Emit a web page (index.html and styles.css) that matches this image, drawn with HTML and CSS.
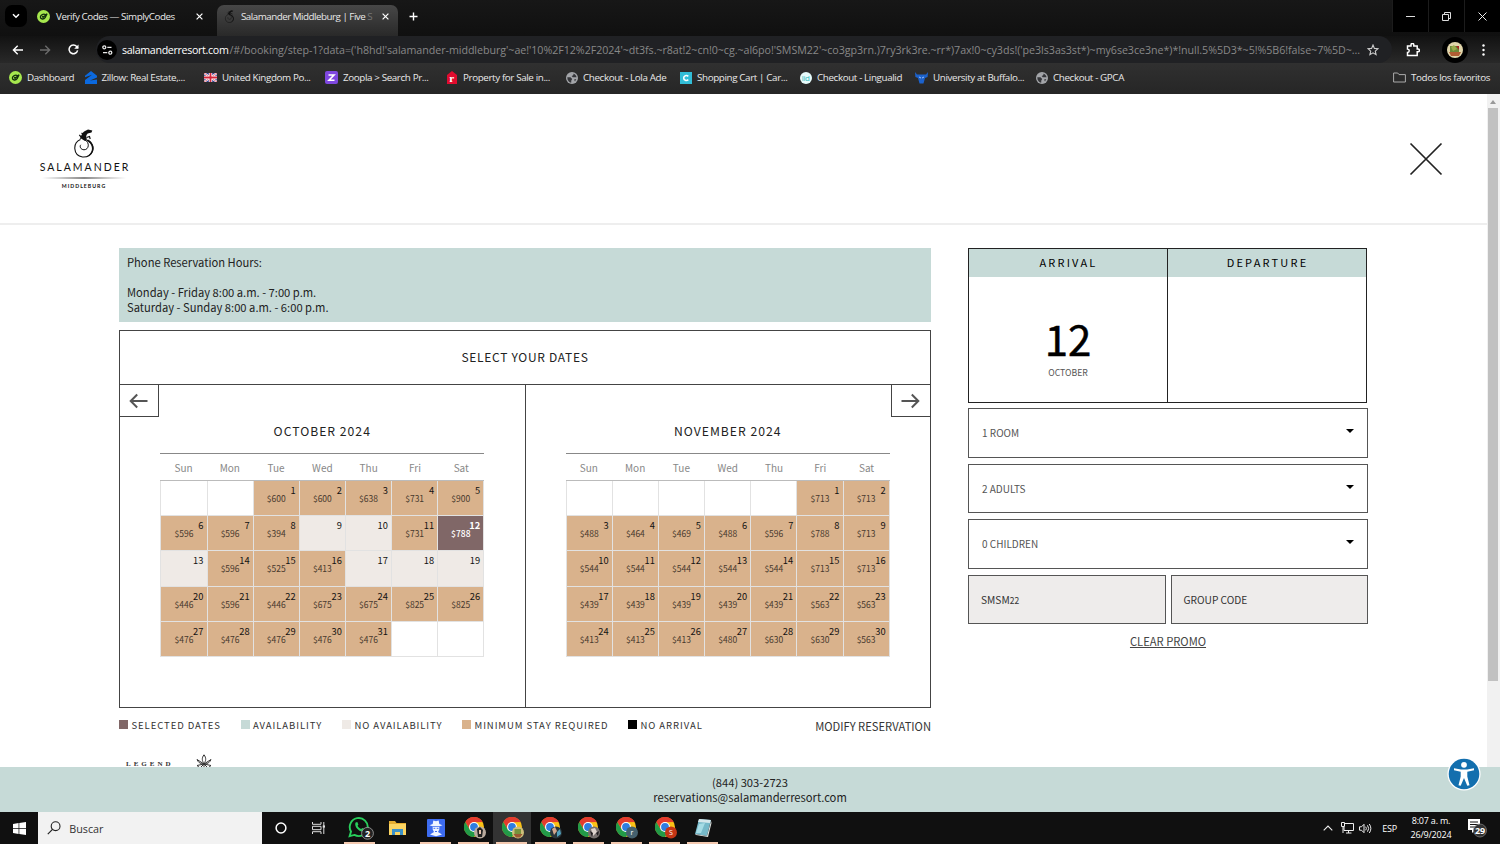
FILE: index.html
```html
<!DOCTYPE html>
<html lang="en">
<head>
    <meta charset="UTF-8">
    <meta name="viewport" content="width=device-width, initial-scale=1.0">
    <title>Salamander Middleburg | Five Star</title>
    <link rel="stylesheet" href="styles.css">
</head>
<body>
    <svg class="defs" width="0" height="0">
        <symbol id="chrome" viewBox="0 0 20 20">
            <circle cx="10" cy="10" r="10" fill="#fbc116"/>
            <path d="M1.3 5A10 10 0 0 1 18.7 5L10 5.2 5.7 12.5Z" fill="#e33b2e"/>
            <path d="M1.3 5A10 10 0 0 0 10 20L14.3 12.5 5.7 12.5Z" fill="#229a48"/>
            <circle cx="10" cy="10" r="5" fill="#fff"/>
            <circle cx="10" cy="10" r="3.9" fill="#2f7de1"/>
        </symbol>
        <symbol id="globe" viewBox="0 0 12 12">
            <circle cx="6" cy="6" r="6" fill="#a3a5a9"/>
            <path d="M1.3 5.2 4.5 5.3 6.2 7 5.3 8.4 5.2 10.7C3 10.4 1.2 8.4 1.3 5.2ZM5 1.3 7.6 1.5 7.2 3.3 5.6 4 6.8 5.3 10.6 5.2C10.3 2.8 8 1 5 1.3ZM8 7.5 10.3 7 9 9.5Z" fill="#35363a"/>
        </symbol>
        <symbol id="codes" viewBox="0 0 12 12">
            <circle cx="6" cy="6" r="6" fill="#a6e84e"/>
            <path d="M7.8 4.2C6 3.3 3.3 4.4 3.1 6.5 3 8.6 6.2 9 7.5 7.1L9.3 3.4 5.6 6.7 4.8 5.8" fill="none" stroke="#14300d" stroke-width="1.2"/>
        </symbol>
        <symbol id="lizard" viewBox="0 0 22 29">
            <path d="M7.5 10.4C-.5 13.5-.3 26.5 9.5 28 20.5 28.5 23 17 16 12.5" fill="none" stroke="#111" stroke-width="1.1"/>
            <path d="M13 11.5C20.5 14.5 21.5 24 12.5 27.9 23 26.5 22.5 14 15 10.5Z" fill="#111"/>
            <path d="M6.5 10.5C8 8 8.5 4 12 2L15 .6 19.3 1.4 18.5 3.6 14.7 4.6C13 6 12.7 8 14 10.5L12 12 8 9.6Z" fill="#111"/>
            <path d="M8.5 8.5 6.3 5.8M10 5 8.5 4M13.5 8.5 16.5 7.5 17.2 10" fill="none" stroke="#111" stroke-width="1.2"/>
            <path d="M12 11C17 13.5 16 20.8 11 20.8 7.6 20.6 6.3 17.4 7.8 15.8" fill="none" stroke="#111" stroke-width="1"/>
        </symbol>
    </svg>

    <!-- Browser -->
    <header class="browser">
        <div class="tabs">
            <button class="tab-search"><svg width="8" height="6" viewBox="0 0 8 6"><path d="M1 1.2 4 4.2 7 1.2" fill="none" stroke="#fff" stroke-width="1.5"/></svg></button>
            <div class="tab">
                <svg width="13" height="13"><use href="#codes"/></svg>
                <span class="tab-title first">Verify Codes — SimplyCodes</span>
                <svg class="x" width="7" height="7" viewBox="0 0 7 7"><path d="M.6.6 6.4 6.4M6.4.6.6 6.4" stroke="#fff" stroke-width="1.2"/></svg>
            </div>
            <div class="tab active">
                <svg width="11" height="13"><use href="#lizard"/></svg>
                <span class="tab-title second">Salamander Middleburg | Five <i>S</i></span>
                <svg class="x" width="7" height="7" viewBox="0 0 7 7"><path d="M.6.6 6.4 6.4M6.4.6.6 6.4" stroke="#fff" stroke-width="1.2"/></svg>
            </div>
            <svg class="new-tab" width="9" height="9" viewBox="0 0 9 9"><path d="M4.5.5V8.5M.5 4.5H8.5" stroke="#fff" stroke-width="1.4"/></svg>
            <div class="window-buttons">
                <span><svg width="9" height="9" viewBox="0 0 9 9"><path d="M0 4.5H9" stroke="#ddd"/></svg></span>
                <span><svg width="9" height="9" viewBox="0 0 9 9"><path d="M.5 2.5H6.5V8.5H.5ZM2.5 2.5V.5H8.5V6.5H6.5" fill="none" stroke="#ddd"/></svg></span>
                <span><svg width="9" height="9" viewBox="0 0 9 9"><path d="M.5.5 8.5 8.5M8.5.5.5 8.5" stroke="#eee"/></svg></span>
            </div>
        </div>
        <div class="toolbar">
            <svg class="nav-back" width="11" height="10" viewBox="0 0 11 10"><path d="M11 5H1.5M5.7.7 1.4 5 5.7 9.3" fill="none" stroke="#fff" stroke-width="1.4"/></svg>
            <svg class="nav-next" width="11" height="10" viewBox="0 0 11 10"><path d="M0 5H9.5M5.3.7 9.6 5 5.3 9.3" fill="none" stroke="#6b6b6b" stroke-width="1.4"/></svg>
            <svg class="nav-reload" width="11" height="11" viewBox="0 0 11 11"><path d="M9.6 6.4A4.3 4.3 0 1 1 8.7 2.6L9.9 4" fill="none" stroke="#fff" stroke-width="1.5"/><path d="M10.5.4V4.8H6.2Z" fill="#fff"/></svg>
            <div class="address">
                <span class="site-info"><svg width="11" height="10" viewBox="0 0 11 10"><g fill="none" stroke="#e8e8e8" stroke-width="1.3"><circle cx="2.3" cy="2.3" r="1.5"/><path d="M5.3 2.3H9.5M1 7.7H5.3"/><circle cx="8.3" cy="7.7" r="1.5"/></g></svg></span>
                <span class="host">salamanderresort.com</span><span class="path">/#/booking/step-1?data=('h8hd!'salamander-middleburg'~ae!'10%2F12%2F2024'~dt3fs.~r8at!2~cn!0~cg.~al6po!'SMSM22'~co3gp3rn.)7ry3rk3re.~rr*)7ax!0~cy3ds!('pe3ls3as3st*)~my6se3ce3ne*)*!null.5%5D3*~5!%5B6!false~7%5D~...</span>
                <svg class="star" width="12" height="12" viewBox="0 0 12 12"><path d="M6 1 7.4 4.4 11 4.7 8.3 7.1 9.1 10.7 6 8.8 2.9 10.7 3.7 7.1 1 4.7 4.6 4.4Z" fill="none" stroke="#ccc" stroke-width="1.1"/></svg>
            </div>
            <svg class="puzzle" width="14" height="14" viewBox="0 0 14 14"><path d="M1.5 3H5V1.8A1.3 1.3 0 0 1 7.8 1.8V3H11.2V6H12A1.4 1.4 0 0 1 12 8.8H11.2V12.5H1.5V9.4C3.8 9.3 3.8 6.2 1.5 6.1Z" fill="none" stroke="#fff" stroke-width="1.5"/></svg>
            <span class="avatar"><svg width="16" height="16" viewBox="0 0 16 16"><circle cx="8" cy="8" r="8" fill="#e0d5aa"/><path d="M3 4H12V11H3Z" fill="#6b8a39"/><path d="M2 10H14L12 14H4Z" fill="#b05d33"/><path d="M4 5 7 3 10 7 6 9Z" fill="#9bac4b"/><path d="M9 4H12V8Z" fill="#a32922"/></svg></span>
            <svg class="dots" width="3" height="12" viewBox="0 0 3 12"><g fill="#fff"><circle cx="1.5" cy="1.5" r="1.2"/><circle cx="1.5" cy="6" r="1.2"/><circle cx="1.5" cy="10.5" r="1.2"/></g></svg>
        </div>
        <div class="bookmarks">
            <a><svg width="13" height="13"><use href="#codes"/></svg>Dashboard</a>
            <a><svg width="12" height="13" viewBox="0 0 12 13"><path d="M6 0 12 4.7V6.5L5 9.4 12 8.4V13H0V9L7 3.8 0 6.2V4.7Z" fill="#0b69df"/></svg>Zillow: Real Estate,...</a>
            <a><svg width="13" height="9" viewBox="0 0 13 9"><path d="M0 0H13V9H0Z" fill="#364391"/><path d="M0 0 13 9M13 0 0 9" stroke="#fff" stroke-width="2"/><path d="M0 0 13 9M13 0 0 9" stroke="#d3253a" stroke-width=".7"/><path d="M6.5 0V9M0 4.5H13" stroke="#fff" stroke-width="3.4"/><path d="M6.5 0V9M0 4.5H13" stroke="#d3253a" stroke-width="1.8"/></svg>United Kingdom Po...</a>
            <a><svg width="13" height="13" viewBox="0 0 13 13"><rect width="13" height="13" rx="2" fill="#7e47df"/><path d="M3.5 4H9L4 9.2H9.5" fill="none" stroke="#fff" stroke-width="1.6"/></svg>Zoopla &gt; Search Pr...</a>
            <a><svg width="12" height="13" viewBox="0 0 12 13"><path d="M6 0 11 4V13H1V4Z" fill="#e00c2e"/><text x="3.2" y="11" class="mark-r">r</text></svg>Property for Sale in...</a>
            <a><svg width="12" height="12"><use href="#globe"/></svg>Checkout - Lola Ade</a>
            <a><svg width="12" height="12" viewBox="0 0 12 12"><rect width="12" height="12" fill="#32bdd7"/><path d="M8.3 4.3C6.5 2.7 3.7 3.7 3.7 6S6.5 9.3 8.3 7.7" fill="none" stroke="#fff" stroke-width="1.6"/></svg>Shopping Cart | Car...</a>
            <a><svg width="12" height="12" viewBox="0 0 12 12"><circle cx="6" cy="6" r="6" fill="#e7fbfb"/><text x="1.8" y="9" class="mark-id">lid</text></svg>Checkout - Lingualid</a>
            <a><svg width="13" height="12" viewBox="0 0 13 12"><path d="M0 0 2 2.5H11L13 0 12.6 5 10 6 8.5 11.5H4.5L3 6 .4 5Z" fill="#1c62cc"/><path d="M4 5 6 6M9 5 7 6" stroke="#bbd5ff" stroke-width=".8"/></svg>University at Buffalo...</a>
            <a><svg width="12" height="12"><use href="#globe"/></svg>Checkout - GPCA</a>
            <a class="all"><svg width="13" height="11" viewBox="0 0 13 11"><path d="M.6 1H4.7L6 2.6H12.4V10H.6Z" fill="none" stroke="#aaa"/></svg>Todos los favoritos</a>
        </div>
    </header>

    <!-- Site -->
    <div class="page">
        <div class="content">
            <div class="site-header">
                <div class="logo">
                    <svg width="22" height="29"><use href="#lizard"/></svg>
                    <span class="logo-name">SALAMANDER</span>
                    <span class="logo-line"></span>
                    <span class="logo-place">MIDDLEBURG</span>
                </div>
                <svg width="34" height="34" viewBox="0 0 34 34"><path d="M1.5 1.5 32.5 32.5M32.5 1.5 1.5 32.5" stroke="#222" stroke-width="1.7"/></svg>
            </div>
            <div class="booking">
                <main class="left">
                    <div class="notice">
                        <p class="hours">Phone Reservation Hours:</p>
                        <p>Monday - Friday 8:00 a.m. - 7:00 p.m.</p>
                        <p class="weekend">Saturday - Sunday 8:00 a.m. - 6:00 p.m.</p>
                    </div>
                    <div class="calendar">
                        <h1>SELECT YOUR DATES</h1>
                        <div class="months">
                            <section class="month">
                                <button class="arrow prev"><svg width="19" height="16" viewBox="0 0 19 16"><path d="M18.5 8H2M8.2 1.5 1.7 8 8.2 14.5" fill="none" stroke="#555" stroke-width="2"/></svg></button>
                                <h2>OCTOBER 2024</h2>
                                <div class="weekdays"><span>Sun</span><span>Mon</span><span>Tue</span><span>Wed</span><span>Thu</span><span>Fri</span><span>Sat</span></div>
                                <div class="days">
                                    <div></div><div></div>
                                    <div class="min"><b>1</b>$600</div><div class="min"><b>2</b>$600</div><div class="min"><b>3</b>$638</div><div class="min"><b>4</b>$731</div><div class="min"><b>5</b>$900</div>
                                    <div class="min"><b>6</b>$596</div><div class="min"><b>7</b>$596</div><div class="min"><b>8</b>$394</div><div class="none"><b>9</b></div><div class="none"><b>10</b></div><div class="min"><b>11</b>$731</div><div class="selected"><b>12</b>$788</div>
                                    <div class="none"><b>13</b></div><div class="min"><b>14</b>$596</div><div class="min"><b>15</b>$525</div><div class="min"><b>16</b>$413</div><div class="none"><b>17</b></div><div class="none"><b>18</b></div><div class="none"><b>19</b></div>
                                    <div class="min"><b>20</b>$446</div><div class="min"><b>21</b>$596</div><div class="min"><b>22</b>$446</div><div class="min"><b>23</b>$675</div><div class="min"><b>24</b>$675</div><div class="min"><b>25</b>$825</div><div class="min"><b>26</b>$825</div>
                                    <div class="min"><b>27</b>$476</div><div class="min"><b>28</b>$476</div><div class="min"><b>29</b>$476</div><div class="min"><b>30</b>$476</div><div class="min"><b>31</b>$476</div><div></div><div></div>
                                </div>
                            </section>
                            <section class="month">
                                <button class="arrow next"><svg width="19" height="16" viewBox="0 0 19 16"><path d="M.5 8H17M10.8 1.5 17.3 8 10.8 14.5" fill="none" stroke="#555" stroke-width="2"/></svg></button>
                                <h2>NOVEMBER 2024</h2>
                                <div class="weekdays"><span>Sun</span><span>Mon</span><span>Tue</span><span>Wed</span><span>Thu</span><span>Fri</span><span>Sat</span></div>
                                <div class="days">
                                    <div></div><div></div><div></div><div></div><div></div>
                                    <div class="min"><b>1</b>$713</div><div class="min"><b>2</b>$713</div>
                                    <div class="min"><b>3</b>$488</div><div class="min"><b>4</b>$464</div><div class="min"><b>5</b>$469</div><div class="min"><b>6</b>$488</div><div class="min"><b>7</b>$596</div><div class="min"><b>8</b>$788</div><div class="min"><b>9</b>$713</div>
                                    <div class="min"><b>10</b>$544</div><div class="min"><b>11</b>$544</div><div class="min"><b>12</b>$544</div><div class="min"><b>13</b>$544</div><div class="min"><b>14</b>$544</div><div class="min"><b>15</b>$713</div><div class="min"><b>16</b>$713</div>
                                    <div class="min"><b>17</b>$439</div><div class="min"><b>18</b>$439</div><div class="min"><b>19</b>$439</div><div class="min"><b>20</b>$439</div><div class="min"><b>21</b>$439</div><div class="min"><b>22</b>$563</div><div class="min"><b>23</b>$563</div>
                                    <div class="min"><b>24</b>$413</div><div class="min"><b>25</b>$413</div><div class="min"><b>26</b>$413</div><div class="min"><b>27</b>$480</div><div class="min"><b>28</b>$630</div><div class="min"><b>29</b>$630</div><div class="min"><b>30</b>$563</div>
                                </div>
                            </section>
                        </div>
                    </div>
                    <div class="legend">
                        <span class="key selected-key">SELECTED DATES</span>
                        <span class="key open-key">AVAILABILITY</span>
                        <span class="key none-key">NO AVAILABILITY</span>
                        <span class="key min-key">MINIMUM STAY REQUIRED</span>
                        <span class="key closed-key">NO ARRIVAL</span>
                        <a class="modify">MODIFY RESERVATION</a>
                    </div>
                    <div class="partners">
                        <span>LEGEND</span>
                        <svg width="16" height="20" viewBox="0 0 16 20"><path d="M8 .8C5.5 4 6 7 8 9.5 10 7 10.5 4 8 .8ZM8 10 1 5.5C2 8 4 10 8 10 12 10 14 8 15 5.5ZM8 10 1 11.5 4 14 8 10 12 14 15 11.5ZM8 9V20" fill="none" stroke="#333"/></svg>
                    </div>
                </main>
                <aside class="right">
                    <div class="stay">
                        <div class="stay-day"><h3>ARRIVAL</h3><strong>12</strong><small>OCTOBER</small></div>
                        <div class="stay-day"><h3>DEPARTURE</h3></div>
                    </div>
                    <div class="select"><span>1 ROOM</span><i></i></div>
                    <div class="select"><span>2 ADULTS</span><i></i></div>
                    <div class="select"><span>0 CHILDREN</span><i></i></div>
                    <div class="codes">
                        <div class="code">SMSM<small>22</small></div>
                        <div class="code">GROUP CODE</div>
                    </div>
                    <a class="clear">CLEAR PROMO</a>
                </aside>
            </div>
        </div>
        <div class="scrollbar"><i></i><span></span></div>
    </div>
    <footer class="contact">
        <p class="phone">(844) 303-2723</p>
        <p class="mail">reservations@salamanderresort.com</p>
        <svg class="access" width="34" height="34" viewBox="0 0 34 34"><circle cx="17" cy="17" r="16.6" fill="#fff"/><circle cx="17" cy="17" r="15.3" fill="#136fae"/><circle cx="17" cy="7.8" r="2.9" fill="#fff"/><path d="M7 11.3 14 12.5H20L27 11.3V13.3L20.3 14.8V19.5L22.5 28.2 20.3 28.8 17 21 13.7 28.8 11.5 28.2 13.7 19.5V14.8L7 13.3Z" fill="#fff"/></svg>
    </footer>

    <!-- Taskbar -->
    <div class="taskbar">
        <span class="start"><svg width="13" height="13" viewBox="0 0 13 13"><path d="M0 1.9 5.6 1.1V6.1H0ZM6.3 1 13 0V6.1H6.3ZM0 6.8H5.6V11.9L0 11.1ZM6.3 6.8H13V13L6.3 12Z" fill="#fff"/></svg></span>
        <div class="search"><svg width="14" height="14" viewBox="0 0 14 14"><circle cx="8.6" cy="5.2" r="4.4" fill="none" stroke="#222" stroke-width="1.1"/><path d="M5.5 8.4.8 13.2" stroke="#222" stroke-width="1.2"/></svg>Buscar</div>
        <span class="task"><svg width="12" height="12" viewBox="0 0 12 12"><circle cx="6" cy="6" r="4.9" fill="none" stroke="#fff" stroke-width="1.5"/></svg></span>
        <span class="task"><svg width="14" height="12" viewBox="0 0 14 12"><path d="M.5 0V2.3H9V0M.5 12V9.7H9V12M.5 4.3H9V7.7H.5ZM11.8 0V12" fill="none" stroke="#ddd"/><path d="M10.7 3.4H13V5.6H10.7Z" fill="#ddd"/></svg></span>
        <span class="task running whatsapp"><svg width="26" height="24" viewBox="0 0 26 24"><path d="M1.6 20.2 3 15.6A9 9 0 1 1 6.4 18.9Z" fill="#101010" stroke="#28cf5c" stroke-width="1.9"/><path d="M7.6 6.4 9.3 6 10.4 8.5 9.6 9.7C10.5 11.4 11.5 12.3 13.2 13L14.3 11.9 16.7 13.1C16.5 15.2 14.8 15.9 12.8 15.2 9.5 14 6 9.6 7.6 6.4Z" fill="#28cf5c"/><circle cx="19.5" cy="17.3" r="5.9" fill="#222" stroke="#aaa" stroke-width=".8"/><text x="19.5" y="20.7" class="badge">2</text></svg></span>
        <span class="task"><svg width="17" height="16" viewBox="0 0 17 16"><path d="M0 1H6L7.5 3H17V15H0Z" fill="#e5ae31"/><path d="M0 4H17V15H0Z" fill="#fbd563"/><path d="M3 15V9H14V15H11V12H6V15Z" fill="#3b91c9"/></svg></span>
        <span class="task running"><svg width="18" height="18" viewBox="0 0 18 18"><rect width="18" height="18" rx="1" fill="#3d6cf0"/><path d="M6.3 1.5 9 2.2 11.7 1.5 12.3 5 15.5 6.3 12.5 7.3H5.5L2.5 6.3 5.7 5ZM5.7 8H12.3V10.5L11 13 15 15.5 9 17.2 3 15.5 7 13 5.7 10.5Z" fill="#f0f5ff"/><path d="M6.5 9.3H8.3M9.7 9.3H11.5M8 12.5H10" stroke="#3d6cf0"/></svg></span>
        <span class="task running profile"><svg width="23" height="22" viewBox="0 0 23 22"><use href="#chrome" width="20" height="20"/><circle cx="16" cy="15.5" r="6" fill="#b9aa9d"/><path d="M13 12 16 10 19 13 18 20H14Z" fill="#222"/><path d="M15 13H17V17H15Z" fill="#e6c2ac"/></svg></span>
        <span class="task running profile current"><svg width="23" height="22" viewBox="0 0 23 22"><use href="#chrome" width="20" height="20"/><circle cx="16" cy="15.5" r="6" fill="#cfbf7a"/><path d="M12.5 12H19V17H12.5Z" fill="#76933d"/><path d="M11.5 17H20.5L18 20.5H14Z" fill="#9b5832"/></svg></span>
        <span class="task running profile"><svg width="23" height="22" viewBox="0 0 23 22"><use href="#chrome" width="20" height="20"/><circle cx="16" cy="15.5" r="6" fill="#28343a"/><path d="M12 12 15 10 17 14 14 18Z" fill="#d3a78d"/><path d="M17 15 20 12 21 17 17 20Z" fill="#51a1bd"/></svg></span>
        <span class="task running profile"><svg width="23" height="22" viewBox="0 0 23 22"><use href="#chrome" width="20" height="20"/><circle cx="16" cy="15.5" r="6" fill="#78716f"/><path d="M13 12 17 11 19 15 15 19Z" fill="#dfd4ce"/><path d="M12 14 15 16 14 20ZM18 16 21 14 20 19Z" fill="#211d20"/></svg></span>
        <span class="task running profile"><svg width="23" height="22" viewBox="0 0 23 22"><use href="#chrome" width="20" height="20"/><circle cx="16" cy="15.5" r="6" fill="#45616f"/><text x="16" y="18" class="user">r</text></svg></span>
        <span class="task running profile"><svg width="23" height="22" viewBox="0 0 23 22"><use href="#chrome" width="20" height="20"/><circle cx="16" cy="15.5" r="6" fill="#c43515"/><text x="16" y="18" class="user">S</text></svg></span>
        <span class="task running"><svg width="18" height="20" viewBox="0 0 18 20"><path d="M5 1 17 2 13 18 1 16Z" fill="#77b9c9"/><path d="M5 1 17 2 16 5 4 4Z" fill="#d6e7eb"/><path d="M1 16 13 18 17 3 17.5 5 14 19 2 17Z" fill="#e3e6e3"/><path d="M5 6 11 5 7 15 2 15Z" fill="#a6dce5"/></svg></span>
        <div class="tray">
            <svg class="chevron" width="10" height="6" viewBox="0 0 10 6"><path d="M.7 5.3 5 1 9.3 5.3" fill="none" stroke="#eee" stroke-width="1.1"/></svg>
            <svg class="network" width="13" height="12" viewBox="0 0 13 12"><path d="M4 1.5H12.5V8.5H3V5M7.5 8.5V11M5 11H10.5M.5.5H3.5V4.5H.5ZM2 5V11" fill="none" stroke="#eee"/></svg>
            <svg class="volume" width="13" height="11" viewBox="0 0 13 11"><path d="M.5 3.8H2.5L5 1.3V9.7L2.5 7.2H.5ZM6.7 3.7Q8 5.5 6.7 7.3M8.5 2.3Q10.8 5.5 8.5 8.7M10.3 1Q13.4 5.5 10.3 10" fill="none" stroke="#eee"/></svg>
            <span class="lang">ESP</span>
            <span class="clock">8:07 a. m.<br>26/9/2024</span>
            <svg class="notes" width="22" height="20" viewBox="0 0 22 20"><path d="M1 1H13V12H8L5 15V12H1Z" fill="#fff"/><path d="M3 4H11M3 6.5H11M3 9H8" stroke="#111"/><circle cx="13" cy="12.5" r="6.5" fill="#333" stroke="#888" stroke-width=".7"/><text x="13" y="16" class="badge">29</text></svg>
        </div>
    </div>
</body>
</html>
```
FILE: styles.css
```css
* {
    box-sizing: border-box;
}
body {
    margin: 0;
    width: 1500px;
    height: 844px;
    overflow: hidden;
    background: #fff;
    font-family: 'Noto Sans CJK SC', 'Open Sans', sans-serif;
    color: #333;
}
h1, h2, h3, p {
    margin: 0;
    font-weight: normal;
}
button {
    padding: 0;
    border: 0;
}
svg {
    display: block;
    flex: none;
}
.defs {
    position: absolute;
}

/* browser */
.browser {
    height: 94px;
    background: #151515;
    color: #e9e9e9;
    font-family: 'Open Sans', sans-serif;
    font-size: 9.8px;
    letter-spacing: -.37px;
    white-space: nowrap;
}
.tabs {
    height: 36px;
    display: flex;
    align-items: center;
    background: linear-gradient(#171717, #101010);
}
.tab-search {
    width: 22px;
    height: 22px;
    margin: -4px 0 0 5px;
    border-radius: 7px;
    background: #000;
    display: flex;
    align-items: center;
    justify-content: center;
}
.tab {
    width: 190px;
    height: 27px;
    padding-left: 10px;
    margin-top: -4px;
    display: flex;
    align-items: center;
}
.tab.active {
    width: 181px;
    height: 31px;
    margin-top: 5px;
    padding: 0 0 8px 7px;
    border-radius: 7px 7px 0 0;
    background: linear-gradient(#474747, #292929);
}
.tab-title {
    margin-left: 6px;
    letter-spacing: -.44px;
}
.tab-title.first {
    width: 140px;
}
.tab-title.second {
    width: 141px;
    letter-spacing: -.5px;
}
.tab-title i {
    font-style: normal;
    color: #777;
}
.new-tab {
    margin: -4px 0 0 11px;
}
.window-buttons {
    display: flex;
    margin-left: auto;
    align-self: flex-start;
    background: #000;
}
.window-buttons span {
    width: 36px;
    height: 32px;
    display: flex;
    align-items: center;
    justify-content: center;
    border-left: 1px solid #1c1c1c;
}
.toolbar {
    height: 27px;
    display: flex;
    align-items: center;
    background: linear-gradient(#121212, #292929);
}
.nav-back {
    margin-left: 12px;
}
.nav-next {
    margin-left: 17px;
}
.nav-reload {
    margin-left: 17px;
}
.address {
    width: 1296px;
    height: 27px;
    margin-left: 17px;
    display: flex;
    flex: none;
    align-items: center;
    border-radius: 14px;
    background: #202124;
    font-size: 10.7px;
}
.site-info {
    width: 20px;
    height: 20px;
    margin: 0 5px 0 1px;
    border-radius: 50%;
    background: #000;
    display: flex;
    align-items: center;
    justify-content: center;
}
.host {
    width: 107.5px;
    letter-spacing: -.34px;
    color: #fff;
}
.path {
    width: 1130px;
    letter-spacing: -.05px;
    color: #888;
}
.star {
    margin-left: 7px;
}
.puzzle {
    margin-left: 14px;
}
.avatar {
    width: 26px;
    height: 26px;
    margin-left: 22px;
    border-radius: 50%;
    background: #000;
    display: flex;
    align-items: center;
    justify-content: center;
}
.dots {
    margin-left: 14px;
}
.bookmarks {
    height: 31px;
    padding: 0 0 2px 9px;
    display: grid;
    grid-template-columns: 75.5px 119.5px 121px 121px 120px 114px 120px 115px 121px 1fr 107px;
    align-items: center;
    background: linear-gradient(#303030, #262626);
}
.bookmarks a {
    display: flex;
    align-items: center;
    gap: 5px;
}
.mark-r {
    font: bold 11px 'Liberation Serif', serif;
    fill: #fff;
}
.mark-id {
    font: 8px 'Open Sans', sans-serif;
    fill: #35b9bb;
}

/* page */
.page {
    height: 673px;
    display: flex;
    overflow: hidden;
}
.content {
    width: 1487px;
}
.scrollbar {
    width: 13px;
    padding: 4px 2px 0 1px;
    background: #f1f1f1;
}
.scrollbar i {
    display: block;
    width: 0;
    margin: 2px 2px 4px;
    border: 3px solid transparent;
    border-top: 0;
    border-bottom: 4px solid #999;
}
.scrollbar span {
    display: block;
    height: 573px;
    background: #c1c1c1;
}
.site-header {
    height: 131px;
    padding: 35px 44px 0 39px;
    display: flex;
    justify-content: space-between;
    border-bottom: 2px solid #eee;
}
.site-header > svg {
    margin-top: 13px;
}
.logo {
    width: 90px;
    display: flex;
    flex-direction: column;
    align-items: center;
    color: #111;
}
.logo-name {
    font: 10.5px/12px Lato, sans-serif;
    letter-spacing: 2px;
    margin: 3px 0 0 2px;
}
.logo-line {
    width: 84px;
    height: 2px;
    margin: 4px 0;
    background: linear-gradient(90deg, transparent, #888, transparent);
}
.logo-place {
    font: bold 5.2px/6px Lato, sans-serif;
    letter-spacing: 1px;
}
.booking {
    display: flex;
    padding: 23px 0 0 119px;
    gap: 37px;
}
.left {
    width: 812px;
}
.right {
    width: 400px;
}
.notice {
    height: 74px;
    padding: 7px 8px;
    background: #c6dad7;
    font-size: 11.2px;
    line-height: 15px;
    color: #222;
}
.hours {
    margin-bottom: 15px;
}
.calendar {
    height: 378px;
    margin-top: 8px;
    border: 1px solid #444;
}
.calendar h1 {
    height: 53px;
    font-size: 12px;
    line-height: 52px;
    text-align: center;
    letter-spacing: .7px;
    color: #222;
}
.months {
    display: flex;
    height: 323px;
    border-top: 1px solid #444;
}
.month {
    width: 405px;
}
.month + .month {
    border-left: 1px solid #444;
    width: 406px;
}
.arrow {
    width: 39px;
    height: 32px;
    display: flex;
    align-items: center;
    justify-content: center;
    background: #fff;
    border-bottom: 1px solid #444;
}
.prev {
    padding-right: 1px;
    border-right: 1px solid #444;
}
.next {
    margin-left: auto;
    padding-right: 1px;
    border-left: 1px solid #444;
}
.month h2 {
    height: 36px;
    line-height: 28px;
    font-size: 12.2px;
    letter-spacing: 1px;
    text-align: center;
    color: #222;
}
.weekdays, .days {
    display: grid;
    grid-template-columns: repeat(7, 1fr);
    width: 324px;
    margin-left: 40.4px;
}
.month + .month .weekdays, .month + .month .days {
    margin-left: 40.2px;
}
.weekdays {
    height: 28px;
    border-top: 1px solid #888;
    border-bottom: 1px solid #bbb;
    font-size: 10px;
    line-height: 28px;
    text-align: center;
    color: #888;
}
.days {
    grid-template-rows: repeat(5, 35.2px);
    border-left: 1px solid #e2e2e2;
}
.days div {
    position: relative;
    padding-top: 12px;
    border-right: 1px solid #e2e2e2;
    border-bottom: 1px solid #e2e2e2;
    font-size: 8.5px;
    line-height: 10px;
    text-align: center;
    color: #47382c;
}
.days b {
    position: absolute;
    top: 4px;
    right: 3px;
    font-size: 9.3px;
    font-weight: normal;
    letter-spacing: .1px;
    line-height: 10px;
    color: #111;
}
.days .min {
    background: #d9b28c;
}
.days .none {
    background: #efeae6;
}
.days .selected {
    background: #806767;
    color: #fff;
    font-weight: 500;
}
.days .selected b {
    color: #fff;
    font-weight: bold;
}
.legend {
    display: flex;
    height: 37px;
    padding-top: 10px;
    font-size: 9.5px;
    line-height: 15px;
    letter-spacing: .93px;
    white-space: nowrap;
}
.key::before {
    content: '';
    display: inline-block;
    width: 9px;
    height: 9px;
    margin-right: 3.5px;
    background: #806767;
}
.selected-key {
    width: 121.5px;
}
.open-key {
    width: 101.5px;
}
.open-key::before {
    background: #c6dad7;
}
.none-key {
    width: 120px;
}
.none-key::before {
    background: #efeae6;
}
.min-key {
    width: 166px;
}
.min-key::before {
    background: #d9b28c;
}
.closed-key::before {
    background: #000;
}
.modify {
    margin-left: auto;
    font-size: 11.2px;
    line-height: 17px;
    letter-spacing: 0;
}
.partners {
    display: flex;
    padding: 9px 0 0 7px;
    gap: 22px;
    font: bold 7px/21px 'Liberation Serif', serif;
    letter-spacing: 3px;
}
.stay {
    width: 399px;
    height: 155px;
    margin-bottom: 5px;
    display: flex;
    border: 1px solid #222;
}
.stay-day {
    flex: 1;
    display: flex;
    flex-direction: column;
    align-items: center;
    color: #000;
}
.stay-day + .stay-day {
    border-left: 1px solid #222;
}
.stay-day h3 {
    width: 100%;
    height: 28px;
    padding-left: 1px;
    background: #c6dad7;
    font-size: 11px;
    line-height: 27px;
    letter-spacing: 2.2px;
    text-align: center;
}
.stay-day strong {
    margin-top: 38px;
    font-size: 42px;
    font-weight: normal;
    line-height: 46px;
    -webkit-text-stroke: .5px #000;
}
.stay-day small {
    margin-top: 3px;
    font-size: 8.7px;
    line-height: 18px;
    color: #555;
}
.select {
    height: 49.5px;
    margin-bottom: 6px;
    padding: 0 13px;
    display: flex;
    align-items: center;
    justify-content: space-between;
    border: 1px solid #555;
    font-size: 10px;
    color: #555;
}
.select i {
    margin: -3px 0 0;
    border: 4px solid transparent;
    border-top: 4px solid #000;
    border-bottom: 0;
}
.codes {
    display: flex;
    gap: 5px;
}
.code {
    flex: 1;
    height: 49.5px;
    padding-left: 12px;
    border: 1px solid #555;
    background: #eeeceb;
    font-size: 10.2px;
    line-height: 48px;
}
.code small {
    font-size: 8.5px;
}
.clear {
    display: block;
    margin-top: 8px;
    font-size: 11.2px;
    line-height: 18px;
    text-align: center;
    text-decoration: underline;
    color: #444;
}

.contact {
    position: relative;
    height: 45px;
    padding-top: 8px;
    background: #c6dad7;
    font-size: 11.2px;
    line-height: 15px;
    text-align: center;
    color: #222;
}
.access {
    position: absolute;
    right: 19px;
    top: -10px;
}

/* taskbar */
.taskbar {
    height: 32px;
    display: flex;
    background: #101010;
    color: #fff;
    font-family: 'Open Sans', sans-serif;
}
.start, .task {
    width: 38.2px;
    display: flex;
    align-items: center;
    justify-content: center;
    flex: none;
}
.search {
    width: 224px;
    padding-left: 9px;
    display: flex;
    align-items: center;
    gap: 8px;
    background: #f2f2f2;
    font-size: 10.8px;
    color: #333;
}
.running {
    background: linear-gradient(#f3c9b0, #f3c9b0) center bottom / 31px 2px no-repeat;
}
.whatsapp {
    padding-left: 3px;
    margin-left: 1.5px;
}
.profile {
    padding-left: 3px;
}
.current {
    background-color: #333;
}
.badge {
    font: bold 9px 'Open Sans', sans-serif;
    fill: #fff;
    text-anchor: middle;
}
.user {
    font: 7px 'Open Sans', sans-serif;
    fill: #fff;
    text-anchor: middle;
}
.tray {
    flex: 1;
    display: flex;
    align-items: center;
    justify-content: flex-end;
    padding-right: 11px;
    font-size: 9px;
    letter-spacing: -.2px;
}
.network {
    margin-left: 8px;
}
.volume {
    margin-left: 5px;
}
.lang {
    margin-left: 10px;
}
.clock {
    width: 42px;
    margin: 0 15px 0 13px;
    line-height: 14px;
    text-align: center;
    white-space: nowrap;
}
```
